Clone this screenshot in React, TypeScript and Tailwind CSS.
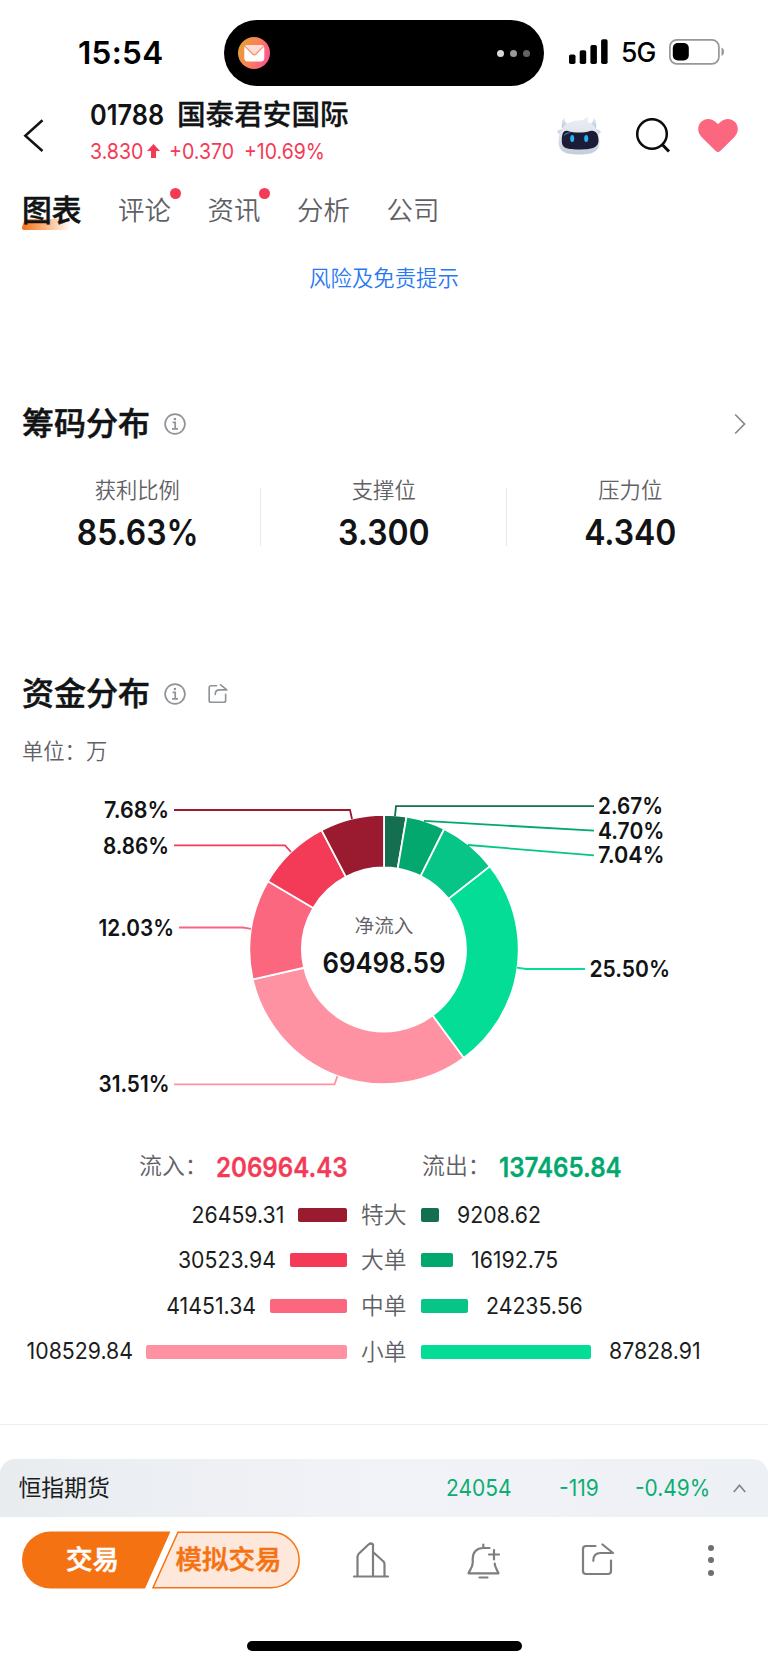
import React from "react";

const SLICES = [
  { pct: 2.67, color: "#136f50" },
  { pct: 4.7, color: "#02a86e" },
  { pct: 7.04, color: "#06c586" },
  { pct: 25.5, color: "#04dd95" },
  { pct: 31.51, color: "#ff92a2" },
  { pct: 12.03, color: "#fa677f" },
  { pct: 8.86, color: "#f33b57" },
  { pct: 7.68, color: "#9a1b2f" },
];

const CX = 384;
const CY = 169.5;
const R_OUT = 134.7;
const R_IN = 82;

function point(r: number, turn: number) {
  const a = turn * Math.PI * 2;
  return `${(CX + r * Math.sin(a)).toFixed(2)} ${(CY - r * Math.cos(a)).toFixed(2)}`;
}

function slicePath(from: number, to: number) {
  return `M${point(R_OUT, from)} A${R_OUT} ${R_OUT} 0 0 1 ${point(R_OUT, to)} L${point(R_IN, to)} A${R_IN} ${R_IN} 0 0 0 ${point(R_IN, from)} Z`;
}

const CALLOUTS = [
  { text: "7.68%", x: 104, y: 38.3, w: 65, color: "#9a1b2f", line: "174,30 350,30 352,39" },
  { text: "8.86%", x: 103, y: 73.6, w: 66, color: "#f33b57", line: "174,65.4 285,65.4 291,72" },
  { text: "12.03%", x: 98.5, y: 155.6, w: 75.5, color: "#fa677f", line: "179,147.5 243,147.5 251,148.8" },
  { text: "31.51%", x: 98.5, y: 312.3, w: 71, color: "#ff92a2", line: "174,304.3 334.5,304.3 337.5,296" },
  { text: "2.67%", x: 598, y: 34.2, w: 65, color: "#136f50", line: "395,36 396,26.2 594,26.2" },
  { text: "4.70%", x: 598, y: 58.7, w: 66.5, color: "#02a86e", line: "424,40.9 594,50.7" },
  { text: "7.04%", x: 598, y: 83.2, w: 66.5, color: "#06c586", line: "468,65 594,75.4" },
  { text: "25.50%", x: 589.5, y: 197, w: 80.5, color: "#04dd95", line: "517,187.6 526,189 585,189" },
];

function Donut() {
  const total = SLICES.reduce((s, d) => s + d.pct, 0);
  let acc = 0;
  return (
    <svg className="block h-[340px] w-[768px]" viewBox="0 0 768 340">
      {SLICES.map((s) => {
        const from = acc / total;
        acc += s.pct;
        return <path key={s.pct} d={slicePath(from, acc / total)} fill={s.color} stroke="#fff" strokeWidth="1.8" />;
      })}
      {CALLOUTS.map((c) => (
        <g key={c.text}>
          <polyline points={c.line} fill="none" stroke={c.color} strokeWidth="1.8" />
          <text x={c.x} y={c.y} textLength={c.w} lengthAdjust="spacingAndGlyphs" fontSize="23" fontWeight="600" fill="#111315">
            {c.text}
          </text>
        </g>
      ))}
      <text x="384" y="152.5" textAnchor="middle" fontSize="19.6" fill="#5f6166" className="font-[350]">
        净流入
      </text>
      <text x="322.5" y="193" textLength="123" lengthAdjust="spacingAndGlyphs" fontSize="27.8" fontWeight="600" fill="#111315">
        69498.59
      </text>
    </svg>
  );
}

const FLOWS = [
  { name: "特大", inText: "26459.31", inW: 49, inBg: "bg-[#9a1b2f]", outText: "9208.62", outW: 18, outBg: "bg-[#136f50]" },
  { name: "大单", inText: "30523.94", inW: 57, inBg: "bg-[#f33b57]", outText: "16192.75", outW: 31.5, outBg: "bg-[#02a86e]" },
  { name: "中单", inText: "41451.34", inW: 77, inBg: "bg-[#fa677f]", outText: "24235.56", outW: 47, outBg: "bg-[#06c586]" },
  { name: "小单", inText: "108529.84", inW: 200.5, inBg: "bg-[#ff92a2]", outText: "87828.91", outW: 170, outBg: "bg-[#04dd95]" },
];

function InfoIcon() {
  return (
    <svg className="size-[22px]" viewBox="0 0 22 22" fill="none" stroke="#909398" strokeWidth="1.7">
      <circle cx="11" cy="11" r="9.9" />
      <path d="M8.6 9.3h2.6v6.4M8 15.8h6" />
      <circle cx="10.9" cy="6" r="1.3" fill="#909398" stroke="none" />
    </svg>
  );
}

function ShareIcon({ className, color, width }: { className: string; color: string; width: number }) {
  return (
    <svg className={className} viewBox="0 0 34 34" fill="none" stroke={color} strokeWidth={width} strokeLinecap="round" strokeLinejoin="round">
      <path d="M14.5 3H5a3 3 0 0 0-3 3v22a3 3 0 0 0 3 3h22a3 3 0 0 0 3-3V17.5" />
      <path d="M21.5 1.500 32 10H19.500C15 10 12.300 12.500 12.300 17.800" />
    </svg>
  );
}

function Robot() {
  return (
    <svg className="h-[40px] w-[46px]" viewBox="0 0 46 40">
      <defs>
        <linearGradient id="shell" x1="0" y1="0" x2="0" y2="1">
          <stop offset="0" stopColor="#eceef3" />
          <stop offset="0.5" stopColor="#dfe3ea" />
          <stop offset="1" stopColor="#c3ccd9" />
        </linearGradient>
        <linearGradient id="horn" x1="0" y1="0" x2="0" y2="1">
          <stop offset="0" stopColor="#e6ebf3" />
          <stop offset="1" stopColor="#b4c2d6" />
        </linearGradient>
      </defs>
      <path d="M8 1.500C5.500 5 5 10 6.500 14L13 9C10 7.500 8.500 5 8 1.500ZM38 1.500C40.500 5 41 10 39.500 14L33 9C36 7.500 37.500 5 38 1.500Z" fill="url(#horn)" />
      <path d="M7 13C4 13 2 14.500 1 15.500C2 17.500 4 18.500 6 18ZM39 13C42 13 44 14.500 45 15.500C44 17.500 42 18.500 40 18Z" fill="#cbd5e3" />
      <path d="M23 4.500C26 4.500 29.500 3 31.500.500C32 2 32 3.500 31.500 5.500C38 8 43.500 15 43.500 25.500C43.500 35 38 38.500 23 38.500S2.500 35 2.500 25.500C2.500 12 11 4.500 23 4.500Z" fill="url(#shell)" />
      <path d="M12 15C18 17 28 17 34 15C39 13.500 42.500 17 42.500 24C42.500 30.500 39 33.500 23 33.500S5.800 30.500 5.800 24C5.800 17 8 13.800 12 15Z" fill="#1b1c36" />
      <path d="M7.500 20.500C8.500 17 11 15.800 15.500 16.800C12 17.300 9.500 18.500 7.500 20.500Z" fill="#3f78cf" />
      <ellipse cx="16.200" cy="22.500" rx="2" ry="3.500" fill="#27b4f7" />
      <ellipse cx="30.200" cy="22.500" rx="2" ry="3.500" fill="#27b4f7" />
    </svg>
  );
}

function StatusBar() {
  return (
    <div className="flex h-[94px] items-start pt-5">
      <div className="flex h-[66px] w-[224px] items-center pl-[78px] text-[31.500px] font-semibold tracking-[0.300px] text-black">15:54</div>
      <div className="flex h-[66px] w-[320px] items-center justify-between rounded-full bg-black pr-[14px] pl-[14px]">
        <svg className="size-8" viewBox="0 0 32 32">
          <defs>
            <linearGradient id="mail" x1="0" y1="0.3" x2="1" y2="0.7">
              <stop offset="0" stopColor="#e8a032" />
              <stop offset="0.55" stopColor="#fb7b62" />
              <stop offset="1" stopColor="#fd4f93" />
            </linearGradient>
          </defs>
          <circle cx="16" cy="16" r="16" fill="url(#mail)" />
          <rect x="6.300" y="8" width="20" height="16.500" rx="3.500" fill="#fff" />
          <path d="M7.300 8.800 Q8 8 9.500 8H23Q24.700 8 25.300 8.800L18 16.800Q16.300 18.500 14.600 16.800Z" fill="#fddcd5" />
          <path d="M7.100 9.300 14.600 17Q16.300 18.700 18 17L25.500 9.300" fill="none" stroke="#fb8a68" strokeWidth="1.200" />
        </svg>
        <div className="flex gap-[6px]">
          <span className="size-[7px] rounded-full bg-[#d9d9d9]" />
          <span className="size-[7px] rounded-full bg-[#9b9b9b]" />
          <span className="size-[7px] rounded-full bg-[#636363]" />
        </div>
      </div>
      <div className="flex h-[66px] items-center pl-[25px]">
        <svg className="mt-[-3px] h-[26px] w-10" viewBox="0 0 40 26">
          <rect x="0" y="15.500" width="6.500" height="9.500" rx="1.800" />
          <rect x="10.700" y="11.200" width="6.500" height="13.800" rx="1.800" />
          <rect x="21.400" y="6" width="6.500" height="19" rx="1.800" />
          <rect x="32.100" y="0.300" width="6.500" height="24.700" rx="1.800" />
        </svg>
        <span className="ml-[12px] w-[36px] text-[26.500px] font-medium tracking-[-1px] text-black">5G</span>
        <svg className="mt-[-3px] ml-[12px] h-[26px] w-14" viewBox="0 0 56 26">
          <rect x="0.900" y="0.900" width="49" height="24" rx="7" fill="none" stroke="#979797" strokeWidth="1.700" />
          <rect x="3.800" y="4" width="16" height="17.500" rx="5" />
          <path d="M52.500 8.500C54.300 9.200 55 11 55 12.800S54.300 16.400 52.500 17Z" fill="#979797" />
        </svg>
      </div>
    </div>
  );
}

function Header() {
  return (
    <header className="flex h-[76px] items-start">
      <svg className="mt-[24px] ml-[22px] h-[36px] w-[24px]" viewBox="0 0 24 36" fill="none" stroke="#111315" strokeWidth="2.500">
        <path d="M20.500 2.300 3.300 17.700 20.500 33" />
      </svg>
      <div className="ml-[44px] flex w-[464px] flex-col">
        <div className="mt-[3px] flex h-[36px] items-center text-[#111315]">
          <span className="w-[87px] origin-left scale-x-[0.89] text-[28.500px] font-semibold">01788</span>
          <span className="text-[28.600px] font-medium [-webkit-text-stroke:0.3px_#111315]">国泰君安国际</span>
        </div>
        <div className="flex h-[36px] items-center text-[21.500px] text-[#f33b57]">
          <span className="w-[57px] origin-left scale-x-[0.91]">3.830</span>
          <svg className="h-[14px] w-[13px]" viewBox="0 0 13 14" fill="#f33b57">
            <path d="M6.500 0 13 7H9V14H4V7H0Z" />
          </svg>
          <span className="ml-[9px] w-[75px] origin-left scale-x-[0.91]">+0.370</span>
          <span className="origin-left scale-x-[0.905]">+10.69%</span>
        </div>
      </div>
      <div className="mt-[21px] flex">
        <div className="mt-px ml-[2px]"><Robot /></div>
        <svg className="mt-[3px] ml-[33px] h-[36px] w-[36px]" viewBox="0 0 36 36" fill="none" stroke="#0b0b0b" strokeWidth="2.500">
          <circle cx="17" cy="16" r="14.800" />
          <path d="M27.200 26.500 34 33.500" strokeWidth="3" />
        </svg>
        <svg className="mt-[3px] ml-[27px] h-[36px] w-[40px]" viewBox="0 0 40 36" fill="#fa677f">
          <path d="M20 34Q18.800 34 17.500 32.700L3.300 18.700C-.8 14.500-.8 8 3 4C7 0 13 0 17 3.500L20 6.300 23 3.500C27 0 33 0 37 4C40.800 8 40.800 14.500 36.700 18.700L22.500 32.700Q21.200 34 20 34Z" />
        </svg>
      </div>
    </header>
  );
}

const TABS = [
  { name: "评论", dot: true },
  { name: "资讯", dot: true },
  { name: "分析", dot: false },
  { name: "公司", dot: false },
];

function Tabs() {
  return (
    <nav className="flex h-[80px] items-center pb-[1px] pl-[22px]">
      <div className="relative w-[96px] text-[29.800px] leading-[40px] font-medium text-[#111315] [-webkit-text-stroke:0.5px_#111315]">
        <svg className="absolute top-[29px] left-0 h-[11px] w-[50px]" viewBox="0 0 50 11">
          <defs>
            <linearGradient id="tab">
              <stop offset="0" stopColor="#f77314" />
              <stop offset="1" stopColor="#f77314" stopOpacity="0" />
            </linearGradient>
          </defs>
          <path d="M3 0H50L46 11H2Q-.3 11 0 8Z" fill="url(#tab)" />
        </svg>
        <span className="relative">图表</span>
      </div>
      {TABS.map((t) => (
        <div key={t.name} className="relative w-[89.500px] text-[26.400px] leading-[40px] font-[350] text-[#5f6166]">
          {t.name}
          {t.dot && <span className="absolute top-[-2px] left-[51.500px] size-[11px] rounded-full bg-[#f33b57]" />}
        </div>
      ))}
    </nav>
  );
}

const STATS = [
  { label: "获利比例", value: "85.63%" },
  { label: "支撑位", value: "3.300" },
  { label: "压力位", value: "4.340" },
];

export default function App() {
  return (
    <div className="flex h-[1665px] w-[768px] flex-col overflow-hidden bg-white font-['Inter','Noto_Sans_CJK_SC',sans-serif]">
      <StatusBar />
      <Header />
      <Tabs />
      <div className="flex h-[56px] items-center justify-center text-[21.400px] font-[350] text-[#2878f5]">风险及免责提示</div>

      <section className="mt-[94px] h-[250px]">
        <div className="flex h-[48px] items-center pl-[22px]">
          <h2 className="text-[32px] leading-[48px] font-medium text-[#111315] [-webkit-text-stroke:0.5px_#111315]">筹码分布</h2>
          <span className="ml-[14px]"><InfoIcon /></span>
          <svg className="ml-auto mr-[22px] h-[22px] w-[12px]" viewBox="0 0 12 22" fill="none" stroke="#85888d" strokeWidth="1.700">
            <path d="M1.200 1.500 10.500 11 1.200 20.500" />
          </svg>
        </div>
        <div className="mt-[26px] flex px-[14px]">
          {STATS.map((s, i) => (
            <div key={s.label} className="relative flex w-[246.500px] flex-col items-center">
              <span className="h-[32px] text-[21.300px] leading-[32px] font-[350] text-[#5f6166]">{s.label}</span>
              <span className="mt-[7px] h-[40px] scale-x-[0.9] text-[35.500px] leading-[40px] font-semibold text-[#111315]">{s.value}</span>
              {i < 2 && <span className="absolute top-[14px] right-0 h-[58px] w-px bg-[#e9eaec]" />}
            </div>
          ))}
        </div>
      </section>

      <section className="mt-[20px]">
        <div className="flex h-[48px] items-center pl-[22px]">
          <h2 className="text-[32px] leading-[48px] font-medium text-[#111315] [-webkit-text-stroke:0.5px_#111315]">资金分布</h2>
          <span className="ml-[14px]"><InfoIcon /></span>
          <ShareIcon className="ml-[22px] size-[20px]" color="#909398" width={2.8} />
        </div>
        <div className="mt-[17px] flex h-[34px] items-center pl-[22px] text-[21.300px] font-[350] text-[#5f6166]">单位：万</div>
        <div className="mt-[11px]">
          <Donut />
        </div>
        <div className="mt-[26px] flex h-[40px] items-center">
          <span className="w-[216px] pl-[139px] text-[22.900px] font-[350] whitespace-nowrap text-[#5f6166]">流入：</span>
          <span className="mt-[2px] w-[206px] origin-left scale-x-[0.9] text-[26.800px] font-semibold text-[#f33b57] [-webkit-text-stroke:0.3px_#f33b57]">206964.43</span>
          <span className="w-[77px] text-[22.900px] font-[350] whitespace-nowrap text-[#5f6166]">流出：</span>
          <span className="mt-[2px] origin-left scale-x-[0.9] text-[26.800px] font-semibold text-[#02a86e] [-webkit-text-stroke:0.3px_#02a86e]">137465.84</span>
        </div>
        <div className="mt-[6px] flex flex-col">
          {FLOWS.map((f) => (
            <div key={f.name} className="flex h-[45.600px] items-center text-[23px] text-[#1b1d20]">
              <div className="flex w-[346.500px] items-center justify-end gap-[13px]">
                <span className="origin-right scale-x-[0.925]">{f.inText}</span>
                <span className={`h-[14px] rounded-[2px] ${f.inBg}`} style={{ width: f.inW }} />
              </div>
              <span className="w-[74.500px] text-center text-[22.700px] font-[350] text-[#5f6166]">{f.name}</span>
              <div className="flex items-center gap-[18px]">
                <span className={`h-[14px] rounded-[2px] ${f.outBg}`} style={{ width: f.outW }} />
                <span className="origin-left scale-x-[0.925]">{f.outText}</span>
              </div>
            </div>
          ))}
        </div>
      </section>

      <div className="mt-auto h-px bg-[#ededef]" />
      <div className="mt-[34px] flex h-[58px] shrink-0 items-center rounded-t-[15px] bg-linear-to-r from-[#e8ecef] via-[#f2f3f8] to-[#edf0f4] text-[22.800px]">
        <span className="w-[446px] pl-[18.500px] text-[#1b1d20]">恒指期货</span>
        <span className="w-[113px] origin-left scale-x-[0.92] text-[#0cae74]">24054</span>
        <span className="w-[76px] origin-left scale-x-[0.92] text-[#0cae74]">-119</span>
        <span className="w-[98px] origin-left scale-x-[0.915] text-[#0cae74]">-0.49%</span>
        <svg className="h-[9px] w-[13px]" viewBox="0 0 13 9" fill="none" stroke="#7e8185" strokeWidth="1.600">
          <path d="M.8 8 6.500 1.300 12.200 8" />
        </svg>
      </div>
      <div className="mt-[14px] flex h-[58px] shrink-0 items-center">
        <div className="relative ml-[21px] h-[58px] w-[280px]">
          <svg className="absolute inset-0 h-[58px] w-[280px]" viewBox="0 0 280 58">
            <path d="M29.500.500H149.500L124 57.500H29.500A28.500 28.500 0 0 1 29.500.500Z" fill="#f57212" />
            <path d="M157 1.300H250.500A27.700 27.700 0 0 1 250.500 56.700H132Z" fill="#fde8db" stroke="#f57212" strokeWidth="1.500" />
          </svg>
          <div className="relative flex h-full items-center text-[26.500px] font-medium">
            <span className="w-[154.500px] pl-[45px] text-white [-webkit-text-stroke:0.6px_#fff]">交易</span>
            <span className="text-[#f57212] [-webkit-text-stroke:0.5px_#f57212]">模拟交易</span>
          </div>
        </div>
        <svg className="ml-[51px] size-[38px]" viewBox="0 0 38 38" fill="none" stroke="#7e7e7e" strokeWidth="2.200" strokeLinecap="round" strokeLinejoin="round">
          <path d="M2 35.500H36M5.500 35V16Q5.500 14 7 12.500L16.500 3.500Q19 1.500 21 3.500V35M21 11 31.500 20.500Q32.500 21.500 32.500 23V35" />
        </svg>
        <svg className="ml-[76px] size-[38px]" viewBox="0 0 38 38" fill="none" stroke="#7e7e7e" strokeWidth="2.200" strokeLinecap="round" strokeLinejoin="round">
          <path d="M17.300 3.500V6M23.500 7H17C10.500 7 6.700 11.500 6.700 18V22C6.700 26 4 28.500 2.500 32.300H32.500C31 28.500 28.700 26 28.700 22.500M28 9V18.500M23 13.500H33M13.500 36.500H21.500" />
        </svg>
        <ShareIcon className="ml-[77px] size-[34px]" color="#7e7e7e" width={2.2} />
        <div className="ml-[93px] flex flex-col gap-[6.500px]">
          <span className="size-[6px] rounded-full bg-[#6f6f6f]" />
          <span className="size-[6px] rounded-full bg-[#6f6f6f]" />
          <span className="size-[6px] rounded-full bg-[#6f6f6f]" />
        </div>
      </div>
      <div className="mx-auto mt-[52px] mb-[14px] h-[10px] w-[275px] shrink-0 rounded-full bg-black" />
    </div>
  );
}
